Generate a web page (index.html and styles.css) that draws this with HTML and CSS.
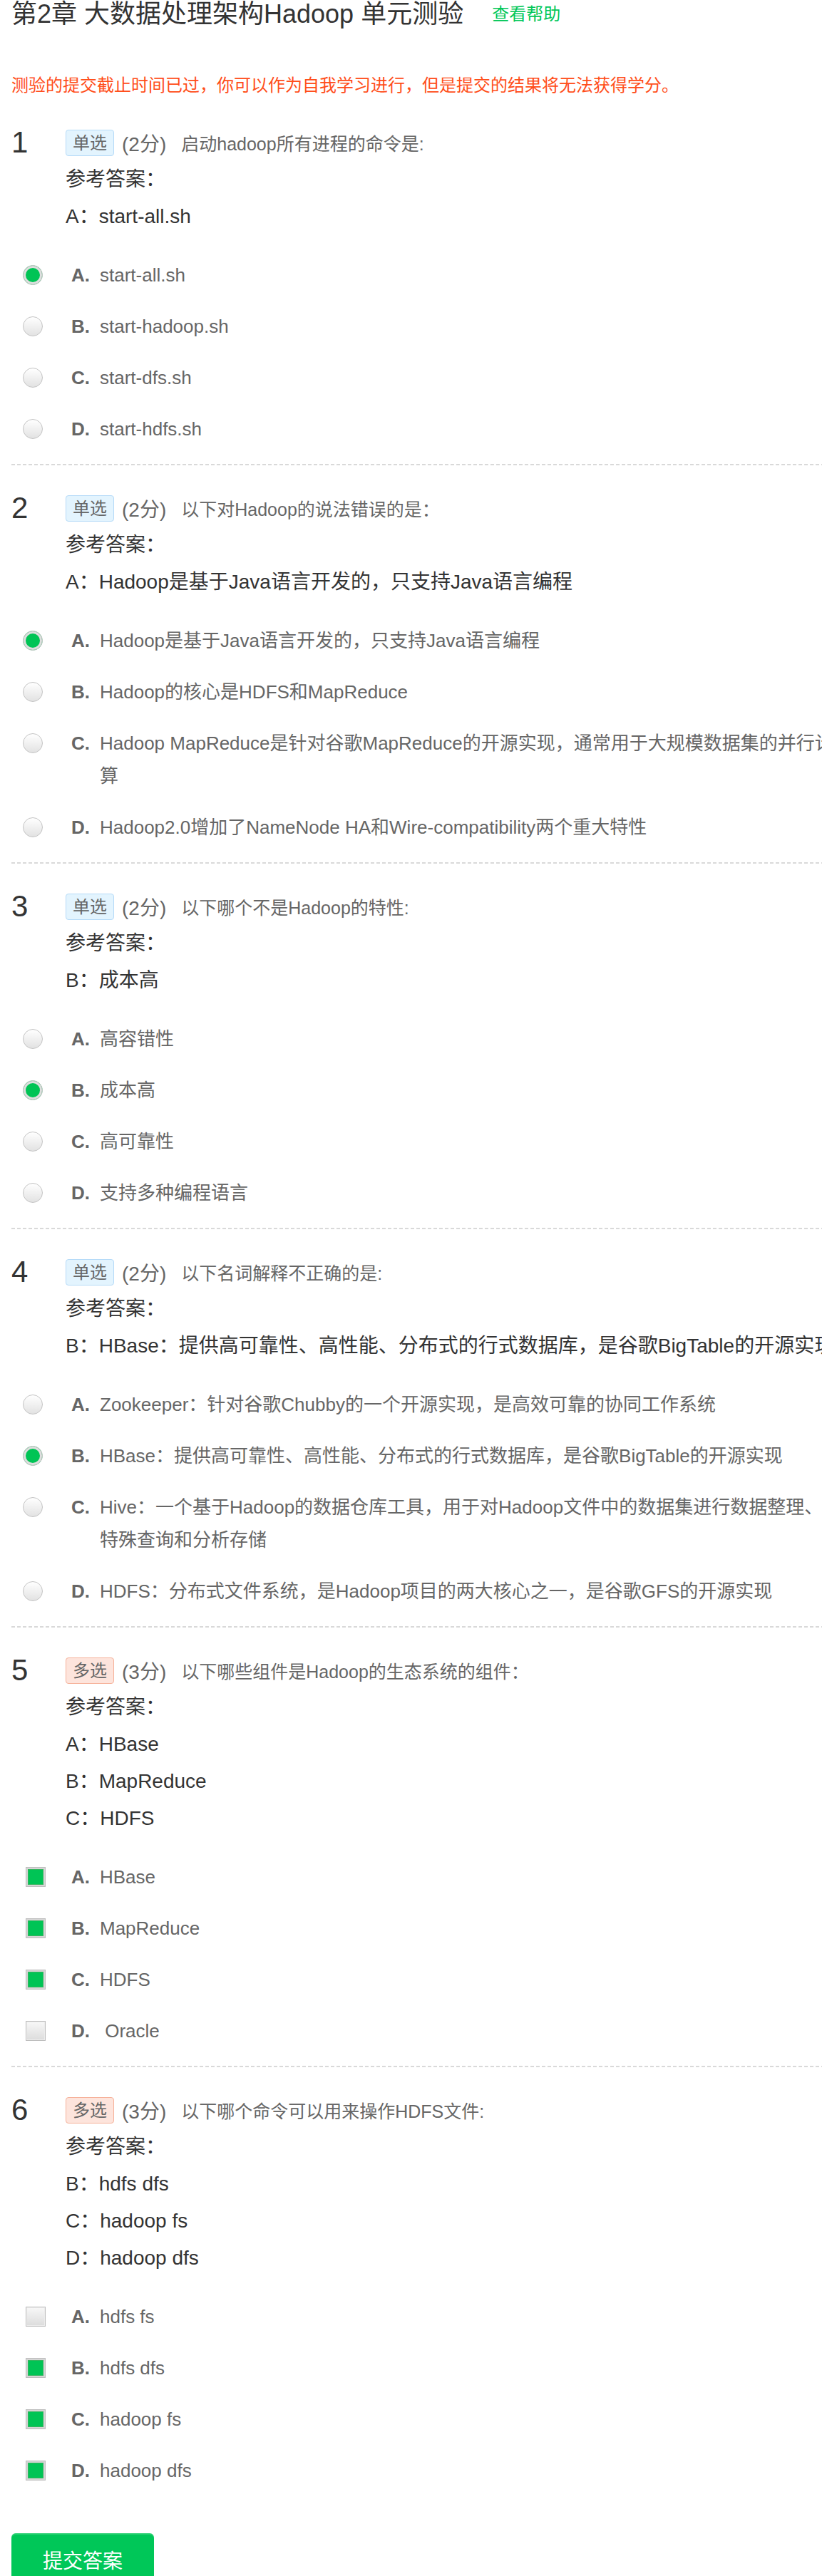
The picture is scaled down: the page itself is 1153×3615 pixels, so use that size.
FILE: index.html
```html
<!DOCTYPE html>
<html lang="zh-CN">
<head>
<meta charset="utf-8">
<title>第2章 大数据处理架构Hadoop 单元测验</title>
<link rel="stylesheet" href="styles.css">
</head>
<body>
<div class="page">
  <div class="head">
    <h1 class="title">第2章 大数据处理架构Hadoop 单元测验</h1>
    <a class="help" href="#">查看帮助</a>
  </div>
  <p class="notice">测验的提交截止时间已过，你可以作为自我学习进行，但是提交的结果将无法获得学分。</p>

  <section class="q">
    <div class="q-main">
      <div class="num">1</div>
      <div class="q-body">
        <div class="q-head"><span class="badge">单选</span><span class="score">(2分)</span><span class="stem">启动hadoop所有进程的命令是:</span></div>
        <div class="ans-title">参考答案：</div>
        <div class="ans">A：start-all.sh</div>
      </div>
    </div>
    <ul class="opts">
      <li class="opt"><span class="radio on"></span><b class="letter">A.</b><span class="txt">start-all.sh</span></li>
      <li class="opt"><span class="radio"></span><b class="letter">B.</b><span class="txt">start-hadoop.sh</span></li>
      <li class="opt"><span class="radio"></span><b class="letter">C.</b><span class="txt">start-dfs.sh</span></li>
      <li class="opt"><span class="radio"></span><b class="letter">D.</b><span class="txt">start-hdfs.sh</span></li>
    </ul>
  </section>

  <section class="q">
    <div class="q-main">
      <div class="num">2</div>
      <div class="q-body">
        <div class="q-head"><span class="badge">单选</span><span class="score">(2分)</span><span class="stem">以下对Hadoop的说法错误的是：</span></div>
        <div class="ans-title">参考答案：</div>
        <div class="ans">A：Hadoop是基于Java语言开发的，只支持Java语言编程</div>
      </div>
    </div>
    <ul class="opts">
      <li class="opt"><span class="radio on"></span><b class="letter">A.</b><span class="txt">Hadoop是基于Java语言开发的，只支持Java语言编程</span></li>
      <li class="opt"><span class="radio"></span><b class="letter">B.</b><span class="txt">Hadoop的核心是HDFS和MapReduce</span></li>
      <li class="opt"><span class="radio"></span><b class="letter">C.</b><span class="txt">Hadoop MapReduce是针对谷歌MapReduce的开源实现，通常用于大规模数据集的并行计算</span></li>
      <li class="opt"><span class="radio"></span><b class="letter">D.</b><span class="txt">Hadoop2.0增加了NameNode HA和Wire-compatibility两个重大特性</span></li>
    </ul>
  </section>

  <section class="q">
    <div class="q-main">
      <div class="num">3</div>
      <div class="q-body">
        <div class="q-head"><span class="badge">单选</span><span class="score">(2分)</span><span class="stem">以下哪个不是Hadoop的特性:</span></div>
        <div class="ans-title">参考答案：</div>
        <div class="ans">B：成本高</div>
      </div>
    </div>
    <ul class="opts">
      <li class="opt"><span class="radio"></span><b class="letter">A.</b><span class="txt">高容错性</span></li>
      <li class="opt"><span class="radio on"></span><b class="letter">B.</b><span class="txt">成本高</span></li>
      <li class="opt"><span class="radio"></span><b class="letter">C.</b><span class="txt">高可靠性</span></li>
      <li class="opt"><span class="radio"></span><b class="letter">D.</b><span class="txt">支持多种编程语言</span></li>
    </ul>
  </section>

  <section class="q">
    <div class="q-main">
      <div class="num">4</div>
      <div class="q-body">
        <div class="q-head"><span class="badge">单选</span><span class="score">(2分)</span><span class="stem">以下名词解释不正确的是:</span></div>
        <div class="ans-title">参考答案：</div>
        <div class="ans">B：HBase：提供高可靠性、高性能、分布式的行式数据库，是谷歌BigTable的开源实现</div>
      </div>
    </div>
    <ul class="opts">
      <li class="opt"><span class="radio"></span><b class="letter">A.</b><span class="txt">Zookeeper：针对谷歌Chubby的一个开源实现，是高效可靠的协同工作系统</span></li>
      <li class="opt"><span class="radio on"></span><b class="letter">B.</b><span class="txt">HBase：提供高可靠性、高性能、分布式的行式数据库，是谷歌BigTable的开源实现</span></li>
      <li class="opt"><span class="radio"></span><b class="letter">C.</b><span class="txt">Hive：一个基于Hadoop的数据仓库工具，用于对Hadoop文件中的数据集进行数据整理、特殊查询和分析存储</span></li>
      <li class="opt"><span class="radio"></span><b class="letter">D.</b><span class="txt">HDFS：分布式文件系统，是Hadoop项目的两大核心之一，是谷歌GFS的开源实现</span></li>
    </ul>
  </section>

  <section class="q">
    <div class="q-main">
      <div class="num">5</div>
      <div class="q-body">
        <div class="q-head"><span class="badge multi">多选</span><span class="score">(3分)</span><span class="stem">以下哪些组件是Hadoop的生态系统的组件：</span></div>
        <div class="ans-title">参考答案：</div>
        <div class="ans">A：HBase</div>
        <div class="ans">B：MapReduce</div>
        <div class="ans">C：HDFS</div>
      </div>
    </div>
    <ul class="opts">
      <li class="opt"><span class="check on"></span><b class="letter cb">A.</b><span class="txt">HBase</span></li>
      <li class="opt"><span class="check on"></span><b class="letter cb">B.</b><span class="txt">MapReduce</span></li>
      <li class="opt"><span class="check on"></span><b class="letter cb">C.</b><span class="txt">HDFS</span></li>
      <li class="opt"><span class="check"></span><b class="letter cb">D.</b><span class="txt">&nbsp;Oracle</span></li>
    </ul>
  </section>

  <section class="q last">
    <div class="q-main">
      <div class="num">6</div>
      <div class="q-body">
        <div class="q-head"><span class="badge multi">多选</span><span class="score">(3分)</span><span class="stem">以下哪个命令可以用来操作HDFS文件:</span></div>
        <div class="ans-title">参考答案：</div>
        <div class="ans">B：hdfs dfs</div>
        <div class="ans">C：hadoop fs</div>
        <div class="ans">D：hadoop dfs</div>
      </div>
    </div>
    <ul class="opts">
      <li class="opt"><span class="check"></span><b class="letter cb">A.</b><span class="txt">hdfs fs</span></li>
      <li class="opt"><span class="check on"></span><b class="letter cb">B.</b><span class="txt">hdfs dfs</span></li>
      <li class="opt"><span class="check on"></span><b class="letter cb">C.</b><span class="txt">hadoop fs</span></li>
      <li class="opt"><span class="check on"></span><b class="letter cb">D.</b><span class="txt">hadoop dfs</span></li>
    </ul>
  </section>

  <button class="submit" type="button">提交答案</button>
</div>
</body>
</html>
```
FILE: styles.css
```css
html {
  overflow-x: hidden;
}
body {
  margin: 0;
  background: #fff;
  color: #333;
  font-family: "Liberation Sans", "Noto Sans CJK SC", sans-serif;
}
.page {
  width: 1160px;
  padding-left: 16px;
}
.head {
  display: flex;
  align-items: center;
  height: 40px;
}
.title {
  margin: 0;
  font-size: 36px;
  font-weight: normal;
  line-height: 40px;
  color: #333;
}
.help {
  margin-left: 40px;
  font-size: 24px;
  line-height: 40px;
  color: #00c758;
  text-decoration: none;
}
.notice {
  margin: 60px 0 0;
  font-size: 24px;
  line-height: 40px;
  color: #ff4e1a;
}
.q {
  padding: 34px 0 15px;
  background-image: repeating-linear-gradient(90deg, #d9d9d9 0 5px, transparent 5px 8px);
  background-size: 100% 2px;
  background-position: left bottom;
  background-repeat: no-repeat;
}
.q.last {
  background: none;
}
.q-main {
  display: grid;
  grid-template-columns: 76px 1fr;
}
.num {
  font-size: 42px;
  line-height: 52px;
  color: #333;
}
.q-head {
  display: flex;
  align-items: center;
  height: 52px;
  white-space: nowrap;
}
.badge {
  font-size: 24px;
  line-height: 35px;
  padding: 0 9px;
  border: 1px solid #b6dbf8;
  background: #e3f4fe;
  border-radius: 4px;
  color: #666;
}
.badge.multi {
  border-color: #f6b29b;
  background: #fde4dc;
}
.score {
  margin-left: 11px;
  font-size: 28px;
  color: #666;
}
.stem {
  margin-left: 21px;
  font-size: 25px;
  color: #666;
}
.ans-title,
.ans {
  font-size: 28px;
  line-height: 52px;
  color: #333;
  white-space: nowrap;
}
.opts {
  list-style: none;
  margin: 20px 0 0;
  padding: 0;
}
.opt {
  display: flex;
  align-items: flex-start;
  padding: 13px 0;
  font-size: 26px;
  line-height: 46px;
  color: #666;
}
.radio {
  flex: none;
  box-sizing: border-box;
  width: 28px;
  height: 28px;
  margin: 9px 0 0 16px;
  border: 1px solid #c4c4c4;
  border-radius: 50%;
  background: linear-gradient(#ffffff, #e2e2e2);
}
.radio.on {
  background: #00c455;
  box-shadow: inset 0 0 0 3px #dedede;
}
.check {
  flex: none;
  box-sizing: border-box;
  width: 28px;
  height: 28px;
  margin: 9px 0 0 20px;
  border: 1px solid #bdbdbd;
  background: linear-gradient(#f8f8f8, #dcdcdc);
  box-shadow: inset 0 0 0 1px #ececec;
}
.check.on {
  background: #00c455;
  box-shadow: inset 0 0 0 2px #d6d6d6, inset 0 0 0 3px #35b55e;
}
.letter {
  flex: none;
  width: 40px;
  margin-left: 40px;
  font-weight: bold;
}
.letter.cb {
  margin-left: 36px;
}
.txt {
  flex: 1;
  min-width: 0;
}
.submit {
  display: block;
  margin-top: 37px;
  width: 200px;
  height: 74px;
  border: none;
  border-radius: 6px;
  background: #00c758;
  box-shadow: inset 0 2px 0 rgba(255, 255, 255, 0.15);
  color: #fff;
  font-family: "Liberation Sans", "Noto Sans CJK SC", sans-serif;
  font-size: 28px;
  padding: 0;
}
```
